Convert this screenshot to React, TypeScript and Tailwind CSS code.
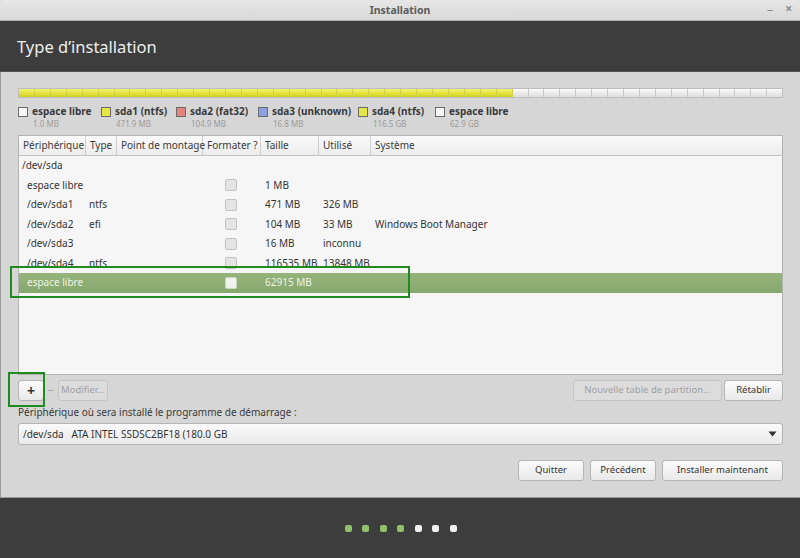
import { useState } from "react";

const legend = [
  { name: "espace libre", size: "1.0 MB", color: "bg-[#f8f8f8]", w: "w-[83px]" },
  { name: "sda1 (ntfs)", size: "471.9 MB", color: "bg-[#e6e645]", w: "w-[75px]" },
  { name: "sda2 (fat32)", size: "104.9 MB", color: "bg-[#e88080]", w: "w-[82px]" },
  { name: "sda3 (unknown)", size: "16.8 MB", color: "bg-[#8e9fe6]", w: "w-[100px]" },
  { name: "sda4 (ntfs)", size: "116.5 GB", color: "bg-[#e6e645]", w: "w-[77px]" },
  { name: "espace libre", size: "62.9 GB", color: "bg-[#f8f8f8]", w: "w-[90px]" },
];

const rows = [
  { dev: "espace libre", type: "", size: "1 MB", used: "", sys: "" },
  { dev: "/dev/sda1", type: "ntfs", size: "471 MB", used: "326 MB", sys: "" },
  { dev: "/dev/sda2", type: "efi", size: "104 MB", used: "33 MB", sys: "Windows Boot Manager" },
  { dev: "/dev/sda3", type: "", size: "16 MB", used: "inconnu", sys: "" },
  { dev: "/dev/sda4", type: "ntfs", size: "116535 MB", used: "13848 MB", sys: "" },
  { dev: "espace libre", type: "", size: "62915 MB", used: "", sys: "" },
];

const cols = "grid grid-cols-[67px_31px_86px_58px_58px_52px_1fr]";

function Btn({ children, className = "", disabled = false }: { children: React.ReactNode; className?: string; disabled?: boolean }) {
  return (
    <div
      className={
        "h-[21px] flex items-center justify-center rounded-[3px] border text-[9.5px] whitespace-nowrap " +
        (disabled
          ? "border-[#c4c4c4] bg-[#dcdcdc] text-[#a0a0a0] "
          : "border-[#b5b5b5] bg-gradient-to-b from-[#fbfbfb] to-[#e9e9e9] text-[#333] ") +
        className
      }
    >
      {children}
    </div>
  );
}

export default function App() {
  const [selected] = useState(5);
  const segments = Array.from({ length: 48 });

  return (
    <div className="w-[800px] h-[558px] flex flex-col bg-[#d6d6d6] text-[#333] overflow-hidden relative" style={{ fontFamily: '"Noto Sans", "Open Sans", sans-serif' }}>
      {/* title bar */}
      <div className="h-[21px] shrink-0 bg-gradient-to-b from-[#e6e6e6] to-[#d8d8d8] border-b border-[#b0b0b0] flex items-center relative rounded-t-[3px]">
        <div className="flex-1 text-center text-[10.5px] font-bold text-[#5c5c5c] mt-[1px]">Installation</div>
        <div className="absolute right-[8px] top-[2px] flex items-center gap-[12px] text-[#888] text-[12px]">
          <span className="leading-none mt-[2px]">–</span>
          <span className="leading-none font-bold">×</span>
        </div>
      </div>

      {/* header */}
      <div className="h-[51px] shrink-0 bg-[#3d3d3d] border-b border-[#555] flex items-center px-[17px]">
        <div className="text-[16.5px] text-[#ededed] mt-[2px]">Type d’installation</div>
      </div>

      {/* body */}
      <div className="flex-1 flex flex-col px-[17px] pt-[16px] border-l border-[#9a9a9a]">
        {/* partition bar */}
        <div className="h-[10px] shrink-0 flex border border-[#bdbdbd] overflow-hidden">
          {segments.map((_, i) => (
            <div
              key={i}
              className={
                "flex-1 border-r last:border-r-0 " +
                (i < 31 ? "bg-gradient-to-b from-[#f2f27a] via-[#e4e43c] to-[#cfcf2a] border-[#d0d040]" : "bg-gradient-to-b from-[#fafafa] to-[#dedede] border-[#c8c8c8]")
              }
            />
          ))}
        </div>

        {/* legend */}
        <div className="flex mt-[6px] h-[31px] shrink-0">
          {legend.map((l, i) => (
            <div key={i} className={"flex shrink-0 " + l.w}>
              <div className={"w-[10px] h-[10px] border border-[#6a6a6a] mt-[3px] mr-[4px] " + l.color} />
              <div className="flex flex-col">
                <div className="text-[10px] font-bold leading-[15px] text-[#3a3a3a] whitespace-nowrap">{l.name}</div>
                <div className="text-[8px] leading-[9px] text-[#9a9a9a] ml-[1px] whitespace-nowrap">{l.size}</div>
              </div>
            </div>
          ))}
        </div>

        {/* table */}
        <div className="h-[240px] shrink-0 border border-[#b3b3b3] bg-[#f6f6f6] flex flex-col text-[10px]">
          <div className={cols + " h-[20px] shrink-0 bg-gradient-to-b from-[#fafafa] to-[#ececec] border-b border-[#c4c4c4] text-[#3a3a3a]"}>
            {["Périphérique", "Type", "Point de montage", "Formater ?", "Taille", "Utilisé", "Système"].map((h, i) => (
              <div key={i} className={"px-[4px] flex items-center whitespace-nowrap " + (i < 6 ? "border-r border-[#cfcfcf]" : "")}>{h}</div>
            ))}
          </div>
          <div className="h-[19.5px] shrink-0 flex items-center px-[3px] text-[#333]">/dev/sda</div>
          {rows.map((r, i) => {
            const sel = i === selected;
            return (
              <div
                key={i}
                className={cols + " h-[19.5px] shrink-0 items-center " + (sel ? "bg-gradient-to-b from-[#94b47c] to-[#86a86c] text-[#eef3e8]" : "text-[#333]")}
              >
                <div className="pl-[8px] whitespace-nowrap">{r.dev}</div>
                <div className="pl-[3px]">{r.type}</div>
                <div />
                <div className="flex justify-center pr-[2px]">
                  <div className={"w-[12px] h-[12px] rounded-[2px] border " + (sel ? "border-[#c8d8bc] bg-[#eef2ea]" : "border-[#c2c2c2] bg-[#e4e4e4]")} />
                </div>
                <div className="pl-[4px] whitespace-nowrap">{r.size}</div>
                <div className="pl-[4px] whitespace-nowrap">{r.used}</div>
                <div className="pl-[4px] whitespace-nowrap">{r.sys}</div>
              </div>
            );
          })}
        </div>

        {/* action buttons */}
        <div className="flex items-center mt-[5px] h-[21px]">
          <Btn className="w-[26px] font-bold text-[14px]">+</Btn>
          <div className="w-[14px] text-center text-[#a8a8a8] text-[12px]">−</div>
          <Btn disabled className="w-[50px]">Modifier...</Btn>
          <div className="flex-1" />
          <Btn disabled className="w-[149px]">Nouvelle table de partition...</Btn>
          <Btn className="w-[59px] ml-[2px]">Rétablir</Btn>
        </div>

        <div className="text-[10px] mt-[3px] h-[16px] flex items-center text-[#3a3a3a]">Périphérique où sera installé le programme de démarrage :</div>

        <div className="mt-[3px] h-[22px] border border-[#b5b5b5] rounded-[3px] bg-gradient-to-b from-[#fbfbfb] to-[#e9e9e9] flex items-center px-[4px] text-[10px] text-[#333]">
          <span className="whitespace-pre">/dev/sda   ATA INTEL SSDSC2BF18 (180.0 GB</span>
          <div className="flex-1" />
          <svg width="9" height="6" viewBox="0 0 9 6" className="mr-[1px]"><path d="M0.5 0.5 L8.5 0.5 L4.5 5.5 Z" fill="#333" /></svg>
        </div>

        <div className="flex justify-end gap-[6px] mt-[15px]">
          <Btn className="w-[66px]">Quitter</Btn>
          <Btn className="w-[66px]">Précédent</Btn>
          <Btn className="w-[121px] border-[#9cc38a]">Installer maintenant</Btn>
        </div>
      </div>

      {/* footer */}
      <div className="h-[61px] shrink-0 bg-[#3d3d3d] border-t border-[#9a9a9a] flex items-center justify-center gap-[10.5px] pl-[1px]">
        {[0, 1, 2, 3, 4, 5, 6].map((i) => (
          <div key={i} className={"w-[7px] h-[7px] rounded-[2px] " + (i < 4 ? "bg-[#93c06c]" : "bg-[#f0f0f0]")} />
        ))}
      </div>

      {/* annotation boxes */}
      <div className="absolute left-[10px] top-[266px] w-[400px] h-[32px] border-2 border-[#1f8a1f]" />
      <div className="absolute left-[8px] top-[372px] w-[37px] h-[35px] border-2 border-[#1f8a1f]" />
    </div>
  );
}
